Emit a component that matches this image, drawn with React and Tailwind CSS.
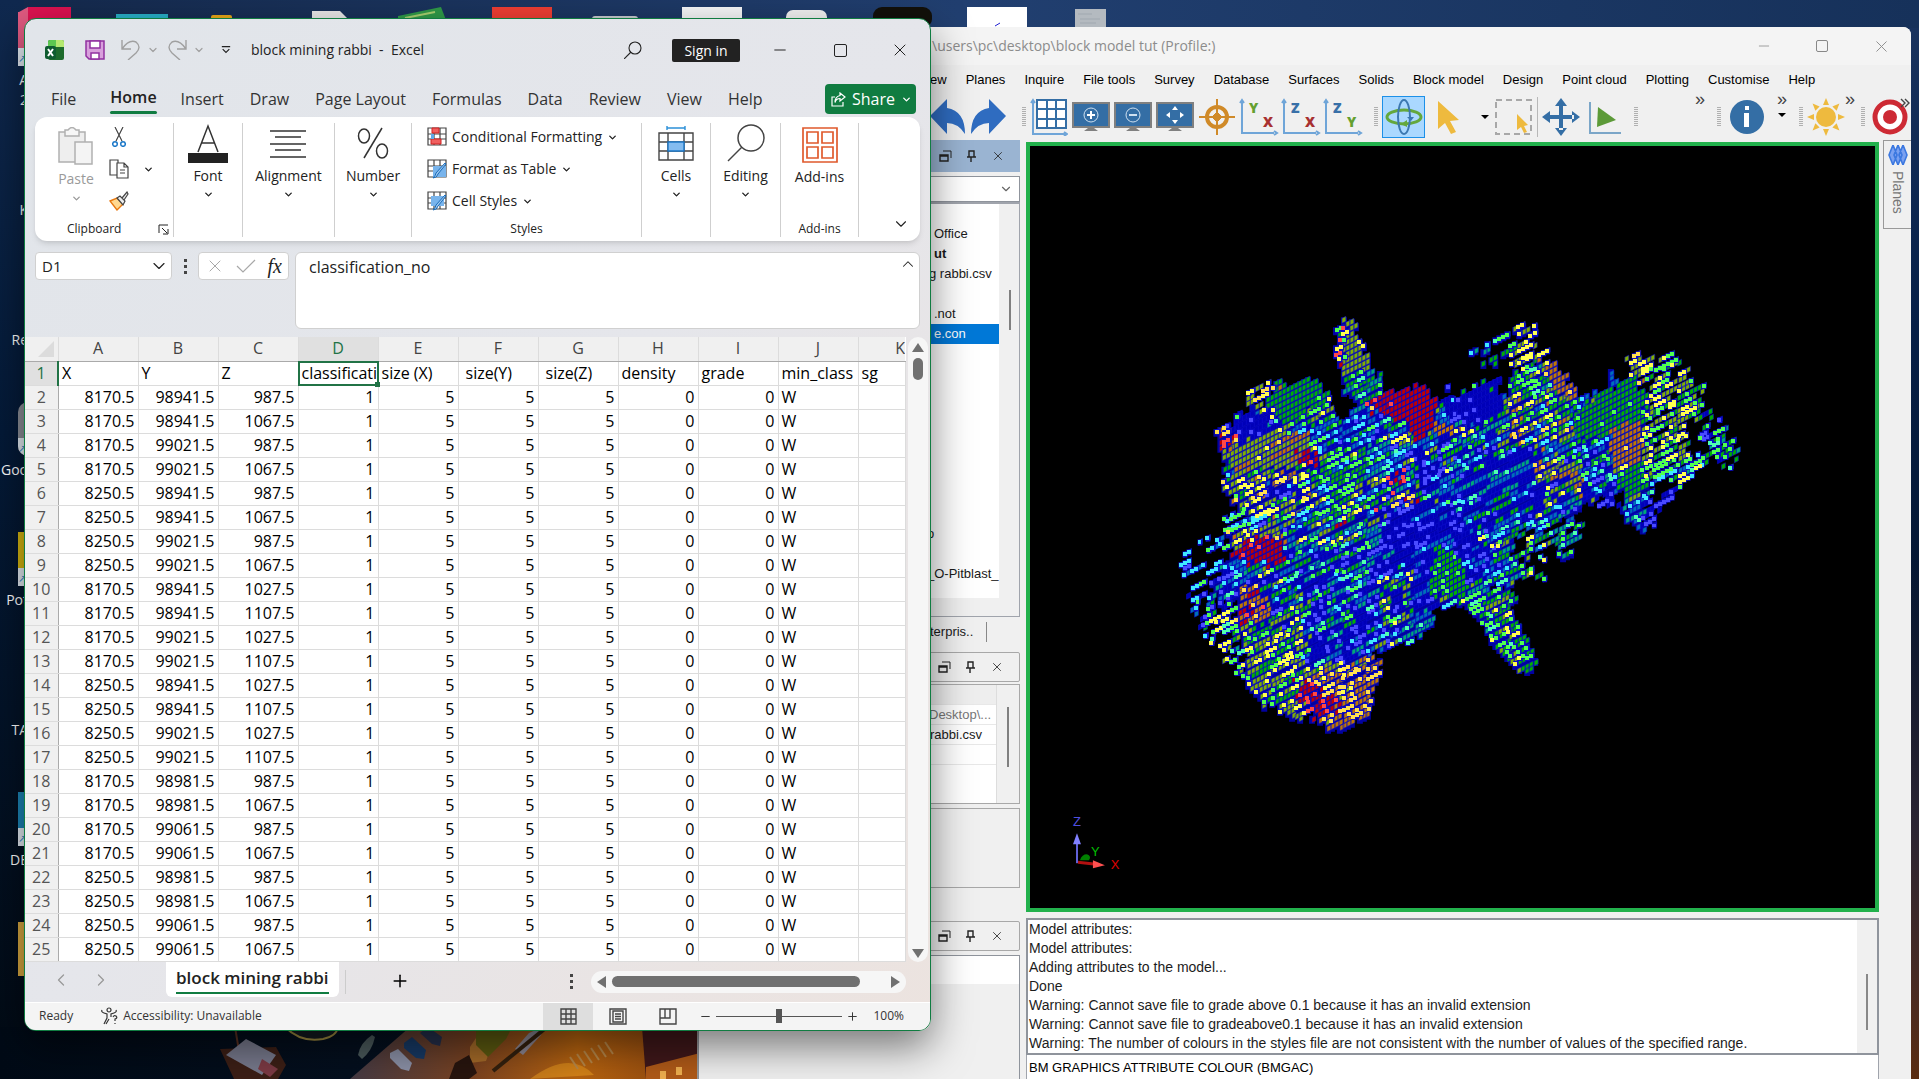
import React, { useState } from 'react';
import { ChevronDown, ChevronUp, ChevronLeft, ChevronRight, X, Plus, Minus } from 'lucide-react';

const HEADERS = ['X', 'Y', 'Z', 'classificati', 'size (X)', 'size(Y)', 'size(Z)', 'density', 'grade', 'min_class', 'sg'];
const COLUMNS = ['A', 'B', 'C', 'D', 'E', 'F', 'G', 'H', 'I', 'J', 'K'];

const COORDS = [
  [8170.5, 98941.5, 987.5], [8170.5, 98941.5, 1067.5], [8170.5, 99021.5, 987.5], [8170.5, 99021.5, 1067.5],
  [8250.5, 98941.5, 987.5], [8250.5, 98941.5, 1067.5], [8250.5, 99021.5, 987.5], [8250.5, 99021.5, 1067.5],
  [8170.5, 98941.5, 1027.5], [8170.5, 98941.5, 1107.5], [8170.5, 99021.5, 1027.5], [8170.5, 99021.5, 1107.5],
  [8250.5, 98941.5, 1027.5], [8250.5, 98941.5, 1107.5], [8250.5, 99021.5, 1027.5], [8250.5, 99021.5, 1107.5],
  [8170.5, 98981.5, 987.5], [8170.5, 98981.5, 1067.5], [8170.5, 99061.5, 987.5], [8170.5, 99061.5, 1067.5],
  [8250.5, 98981.5, 987.5], [8250.5, 98981.5, 1067.5], [8250.5, 99061.5, 987.5], [8250.5, 99061.5, 1067.5],
];

const MENUS = ['ew', 'Planes', 'Inquire', 'File tools', 'Survey', 'Database', 'Surfaces', 'Solids', 'Block model', 'Design', 'Point cloud', 'Plotting', 'Customise', 'Help'];

const LOG = [
  'Model attributes:',
  'Model attributes:',
  'Adding attributes to the model...',
  'Done',
  'Warning: Cannot save file to grade above 0.1 because it has an invalid extension',
  'Warning: Cannot save file to gradeabove0.1 because it has an invalid extension',
  'Warning: The number of colours in the styles file are not consistent with the number of values of the specified range.',
];

/* ---------- Block model ---------- */

// [front face, side face]
const GRADES = {
  b: ['#4a4aff', '#0000b8'],
  c: ['#40e8ff', '#0070b8'],
  t: ['#50ffb0', '#00a878'],
  g: ['#50ff50', '#00b000'],
  y: ['#ffff50', '#80b000'],
  o: ['#ffe050', '#c07800'],
  r: ['#ff4848', '#c00000'],
};

// later zones win over earlier ones: outline, grades, share of visible fronts, density
const ZONES = [
  { p: '205,350 250,330 300,300 440,300 490,350 530,320 640,290 740,290 900,290 1000,250 1110,280 1200,270 1300,300 1300,480 1215,570 1160,600 1080,640 1000,700 940,850 880,860 800,905 735,930 735,980 660,1020 580,1060 400,1120 300,1080 210,900 200,690 240,640 190,560 190,470', c: 'bcgtycbg', f: 0.3, d: 1 },
  // left fan
  { p: '65,770 90,730 170,710 240,700 240,900 250,1100 185,1075 155,1050 120,980 100,930 80,820', c: 'ccbgc', f: 0.7, d: 0.42 },
  { p: '130,920 220,900 280,1100 300,1200 230,1140 160,1050', c: 'yggyt', f: 0.7, d: 0.6 },
  { p: '170,650 240,640 300,640 300,700 200,690', c: 'ccgb', f: 0.7, d: 0.9 },
  // top left lobe
  { p: '240,310 255,262 330,240 360,300 300,330', c: 'yyo', f: 0.5, d: 0.8 },
  { p: '300,290 330,250 400,225 440,230 470,300 450,340 330,370', c: 'ggg', f: 0.02, d: 1 },
  { p: '390,330 460,290 490,350 440,375 390,375', c: 'yyg', f: 0.35, d: 1 },
  { p: '200,360 260,320 310,350 310,390 220,420', c: 'bbb', f: 0.1, d: 1 },
  { p: '165,390 190,375 215,400 215,430 175,450', c: 'rro', f: 0.45, d: 1 },
  { p: '190,440 220,420 330,385 420,390 420,440 380,490 210,515 190,470', c: 'yyyyo', f: 0.02, d: 1 },
  { p: '195,510 420,500 420,560 380,640 240,640 190,560', c: 'yyygo', f: 0.45, d: 1 },
  { p: '290,545 390,540 390,590 300,590', c: 'bcb', f: 0.2, d: 1 },
  { p: '370,460 440,450 445,490 375,490', c: 'rrr', f: 0.1, d: 1 },
  { p: '390,380 560,320 620,400 560,440 430,440', c: 'cccbg', f: 0.5, d: 1 },
  { p: '430,440 620,440 600,560 520,640 400,640 420,520', c: 'gggycg', f: 0.4, d: 1 },
  // spike
  { p: '475,90 500,55 522,55 550,110 575,190 590,240 500,230 475,130', c: 'yyyy', f: 0.04, d: 1 },
  { p: '470,85 500,60 510,130 505,200 485,200', c: 'yryg', f: 0.9, d: 1 },
  { p: '495,215 585,210 625,300 530,310 510,280', c: 'ggt', f: 0.3, d: 1 },
  // red core
  { p: '555,300 590,280 640,270 705,250 740,290 740,380 690,430 670,370 600,350', c: 'rrrrr', f: 0.05, d: 1 },
  { p: '555,290 600,275 610,330 570,330', c: 'rro', f: 0.5, d: 1 },
  { p: '740,360 800,370 790,410 740,420', c: 'oo', f: 0.05, d: 1 },
  { p: '765,300 900,230 920,330 860,370 780,350', c: 'bbb', f: 0.1, d: 1 },
  { p: '765,255 795,250 785,275 765,275', c: 'b', f: 0.3, d: 1 },
  { p: '820,270 900,220 910,245 830,285', c: 'bbg', f: 0.1, d: 1 },
  // upper right streaks
  { p: '950,70 1005,72 1000,98 950,95', c: 'yy', f: 0.6, d: 1 },
  { p: '895,105 940,90 940,108 900,125', c: 'ggt', f: 0.4, d: 1 },
  { p: '830,150 880,125 880,145 830,168', c: 'tc', f: 0.3, d: 1 },
  { p: '858,185 940,140 940,158 865,195', c: 'gg', f: 0.1, d: 1 },
  { p: '940,120 1000,115 1035,140 1040,180 1000,210 940,185', c: 'yygy', f: 0.4, d: 0.9 },
  { p: '940,210 1000,190 1060,260 1140,290 1130,360 940,320', c: 'ggygt', f: 0.3, d: 1 },
  { p: '1020,170 1060,185 1115,270 1080,290 1030,220', c: 'oo', f: 0.1, d: 1 },
  { p: '940,290 1130,300 1130,420 1000,440 900,400', c: 'ygycgog', f: 0.35, d: 1 },
  // middle
  { p: '560,440 780,400 880,440 780,520 600,600 540,560', c: 'ggcbyt', f: 0.3, d: 1 },
  { p: '690,460 770,450 770,540 690,540', c: 'bbc', f: 0.5, d: 1 },
  { p: '620,510 655,505 655,540 620,540', c: 'r', f: 0.4, d: 1 },
  { p: '590,580 690,570 690,605 590,610', c: 'oyr', f: 0.5, d: 1 },
  { p: '780,480 1000,440 1060,540 1000,640 900,700 800,640', c: 'btcbgb', f: 0.12, d: 1 },
  { p: '1000,480 1120,440 1140,560 1040,620', c: 'yogyb', f: 0.12, d: 1 },
  { p: '600,620 780,600 880,740 900,800 800,860 700,930 640,800 600,700', c: 'bbbbbc', f: 0.25, d: 1 },
  { p: '370,760 600,720 660,820 620,1000 500,1080 400,1100 400,880', c: 'bbcbbtg', f: 0.35, d: 1 },
  { p: '400,680 600,640 600,730 420,740', c: 'gtyc', f: 0.25, d: 1 },
  { p: '470,660 505,655 500,680 470,685', c: 'r', f: 0.2, d: 1 },
  { p: '590,840 680,820 660,960 590,960', c: 'gytb', f: 0.2, d: 1 },
  { p: '740,740 790,740 830,860 790,900 735,880', c: 'ggg', f: 0.08, d: 1 },
  { p: '660,950 735,925 735,980 655,1030', c: 'tct', f: 0.2, d: 1 },
  // lower right fragments
  { p: '930,690 1080,640 1135,665 1105,740 1020,735 950,770', c: 'ggtyc', f: 0.35, d: 0.8 },
  { p: '1065,750 1095,750 1090,775 1065,778', c: 'gt', f: 0.6, d: 1 },
  { p: '950,780 1030,765 1030,835 965,835', c: 'gyt', f: 0.5, d: 0.7 },
  { p: '1150,570 1215,570 1215,630 1180,630', c: 'b', f: 0.4, d: 0.9 },
  { p: '800,890 860,870 945,850 945,920 970,1000 1000,1060 1000,1110 960,1110 890,1020', c: 'ggggy', f: 0.25, d: 1 },
  { p: '810,890 860,870 890,960 960,1060 940,1070 860,980', c: 'tcggg', f: 0.8, d: 1 },
  // bottom left
  { p: '205,740 270,700 340,700 345,790 240,790', c: 'rrrrr', f: 0.05, d: 1 },
  { p: '200,690 330,670 345,740 300,700 210,740', c: 'yyo', f: 0.2, d: 1 },
  { p: '190,780 240,770 250,860 180,920 150,860', c: 'bbct', f: 0.5, d: 1 },
  { p: '225,860 280,860 310,960 220,970', c: 'oro', f: 0.2, d: 1 },
  { p: '220,970 400,960 400,1100 300,1180 250,1080', c: 'yyg', f: 0.3, d: 1 },
  { p: '230,1080 400,1060 400,1260 370,1260 320,1220 280,1200 240,1160', c: 'yyygg', f: 0.4, d: 1 },
  { p: '385,1110 480,1080 590,1070 605,1120 575,1160 575,1230 515,1280 460,1295 430,1245', c: 'oooy', f: 0.4, d: 1 },
  { p: '370,1150 430,1150 500,1230 430,1250 375,1190', c: 'rrrr', f: 0.25, d: 1 },
  // right arm
  { p: '1100,320 1260,230 1300,280 1300,400 1180,430 1110,400', c: 'gggg', f: 0.02, d: 1 },
  { p: '1100,430 1200,400 1220,540 1140,560', c: 'tcbg', f: 0.3, d: 1 },
  { p: '1240,190 1270,148 1310,160 1300,240 1250,230', c: 'yyoy', f: 0.5, d: 0.85 },
  { p: '1195,205 1220,205 1215,260 1195,250', c: 'c', f: 0.5, d: 1 },
  { p: '1300,200 1345,155 1395,165 1415,230 1440,260 1440,340 1380,480 1280,480 1290,300', c: 'yygyg', f: 0.5, d: 0.9 },
  { p: '1195,370 1290,370 1280,480 1210,520 1200,440', c: 'ooo', f: 0.06, d: 1 },
  { p: '1210,500 1290,480 1290,600 1240,600', c: 'gyg', f: 0.1, d: 1 },
  { p: '1410,340 1460,300 1535,440 1520,510 1460,490', c: 'gtggb', f: 0.35, d: 0.85 },
  { p: '1290,480 1460,450 1410,540 1370,560 1290,600', c: 'gtcyg', f: 0.8, d: 0.85 },
  { p: '1290,590 1370,550 1345,630 1320,635 1320,675 1285,680', c: 'bb', f: 0.6, d: 0.9 },
  { p: '1240,600 1290,590 1285,680 1240,650', c: 'ctc', f: 0.4, d: 1 },
].map((z) => ({ ...z, p: z.p.split(' ').map((s) => s.split(',').map(Number)) }));

function inside(poly, x, y) {
  let hit = false;
  for (let i = 0, j = poly.length - 1; i < poly.length; j = i++) {
    const [xi, yi] = poly[i];
    const [xj, yj] = poly[j];
    if (yi > y !== yj > y && x < ((xj - xi) * (y - yi)) / (yj - yi) + xi) hit = !hit;
  }
  return hit;
}

function noise(a, b) {
  const n = Math.sin(a * 127.1 + b * 311.7) * 43758.5453;
  return n - Math.floor(n);
}

function buildModel() {
  const sides = {};
  const fronts = {};
  let core = '';
  let rims = '';
  for (let i = 0; i < 150; i++) {
    for (let j = 0; j < 130; j++) {
      const x = i * 4;
      const y = j * 6 - i * 2;
      // wobble the zone edges so they do not read as straight cuts
      const zx = x * 2.613 + (noise(i, j) - 0.5) * 22;
      const zy = y * 3 + (noise(j, i) - 0.5) * 22;
      let zone = null;
      for (const z of ZONES) if (inside(z.p, zx, zy)) zone = z;
      if (!zone || noise(Math.floor(i / 2), j + 7) > zone.d) continue;
      const mixed = zone.f > 0.1;
      const run = mixed ? 2 + Math.floor(noise(j, 4) * 4) : 5;
      const pick = Math.floor(noise(Math.floor(i / run) + 3, j + 0.5) * zone.c.length);
      const [front, side] = GRADES[zone.c[pick]];
      const dx = mixed ? Math.round(noise(j, Math.floor(i / 6)) * 2) : 0;
      const dy = mixed ? Math.round(noise(Math.floor(i / 6), j) * 3) - 1 : 0;
      if (zone.d === 1) core += `M${x - 1} ${y - 1}h6v8h-6z`;
      sides[side] = (sides[side] || '') + `M${x + dx} ${y + dy}l4 -2v5l-4 2z`;
      if (noise(i + 50, j * 2) < zone.f) {
        rims += `M${x + dx - 1} ${y + dy - 1}h5v6h-5z`;
        fronts[front] = (fronts[front] || '') + `M${x + dx - 1} ${y + dy}h4v4h-4z`;
      }
    }
  }
  return { core, rims, sides: Object.entries(sides), fronts: Object.entries(fronts) };
}

const MODEL = buildModel();

function ModelView() {
  return (
    <svg className="block h-full w-full" viewBox="0 0 846 765" role="img" aria-label="Block model">
      <g transform="translate(120 155)">
        <path d={MODEL.core} fill="#0202a0" />
        <g stroke="#0a0ac8" strokeWidth="0.6">
          {MODEL.sides.map(([fill, d]) => <path key={fill} d={d} fill={fill} />)}
        </g>
        <path d={MODEL.rims} fill="#0a0ac8" />
        <g shapeRendering="crispEdges">
          {MODEL.fronts.map(([fill, d]) => <path key={fill} d={d} fill={fill} />)}
        </g>
      </g>
      <g fontFamily="Liberation Sans, sans-serif" fontSize="13">
        <text x="42" y="683" fill="#5050e0">Z</text>
        <text x="60" y="713" fill="#00c000">Y</text>
        <text x="80" y="726" fill="#e00000">X</text>
      </g>
      <path d="M46 720V698" stroke="#6060d8" strokeWidth="2" />
      <path d="M42 701l4 -11 4 11z" fill="#8080ff" />
      <path d="M47 719l18 2" stroke="#b01010" strokeWidth="3" />
      <path d="M62 717l12 5 -12 3z" fill="#ff5050" />
      <path d="M49 717q2-6 7-6q5 2 2 6z" fill="#008000" />
    </svg>
  );
}

/* ---------- Desktop ---------- */

function Wallpaper() {
  return (
    <>
      <div className="absolute inset-0 bg-linear-to-b from-[#1a3460] via-[#061f47] via-30% to-[#02070f]" />
      <div className="absolute inset-x-0 top-0 h-7 bg-linear-to-r from-[#14294c] via-[#213f70] to-[#16315a]" />
      <div className="absolute inset-y-0 left-0 w-6 bg-linear-to-b from-[#10294f] via-[#041a38] via-40% to-[#020a14]" />
      <div className="absolute right-0 bottom-0 h-[520px] w-2 bg-linear-to-b from-transparent via-[#2a2433] to-[#5a2c10]" />
      <svg className="absolute bottom-0 left-0 h-[52px] w-[700px]" viewBox="0 0 700 52" preserveAspectRatio="none">
        <defs>
          <linearGradient id="quay" x1="0" x2="1">
            <stop offset="0" stopColor="#453a44" />
            <stop offset="0.35" stopColor="#7a4220" />
            <stop offset="0.65" stopColor="#b8640f" />
            <stop offset="1" stopColor="#8a4410" />
          </linearGradient>
          <linearGradient id="sea" x1="0" x2="1">
            <stop offset="0" stopColor="#010a16" />
            <stop offset="1" stopColor="#071426" />
          </linearGradient>
        </defs>
        <rect width="700" height="52" fill="url(#sea)" />
        <path d="M350 52L410 0H700V52z" fill="url(#quay)" />
        <path d="M220 22l14 30h44l8-14-10-18z" fill="#3c1f16" />
        <path d="M235 0l4 24" stroke="#5a3020" strokeWidth="2" />
        <path d="M246 12l30 16-14 20-36-20z" fill="#77798c" />
        <path d="M262 32l16 10-8 8-12-8z" fill="#7c3a44" />
        <path d="M285 0q16 16 38 12q14-3 15-12z" fill="#141a20" stroke="#a08c40" strokeWidth="2" />
        <path d="M358 28q2-12 14-20l3 2q-3 14-13 22z" fill="#4b5a5c" />
        <path d="M390 26l8-4 14 14-3 8-8-2-11-11z" fill="#8b90a6" />
        <path d="M404 16l8-6 14 13-2 9-8-1-12-10z" fill="#173a66" />
        <path d="M420 6l8-6 14 10-2 9-8-2z" fill="#25304c" />
        <path d="M470 20l8-12 14 10-6 16-16 2z" fill="#a46a28" />
        <path d="M455 36l14-8 8 18-8 6h-20z" fill="#28150e" />
        <path d="M476 0h36l-6 12-18 18-12-12z" fill="#5c5a10" />
        <path d="M515 22l14-16 14-6-2 8-18 20z" fill="#8d8794" />
        <path d="M493 44l54-44" stroke="#33200e" strokeWidth="4" />
        <path d="M530 52q40-30 64-4z" fill="#f0a020" opacity="0.5" />
        {[0, 1, 2, 3, 4, 5].map((n) => (
          <path key={n} d="M570 30l8 12" transform={`translate(${n * 7} ${-n * 3})`} stroke="#b8884a" strokeWidth="2" />
        ))}
        <path d="M642 0h58v52h-54z" fill="#40181a" />
        <path d="M646 40l54-14v26h-54z" fill="#b05a18" />
        <path d="M660 44h6v8h-6zM676 40h6v8h-6z" fill="#f0b050" />
      </svg>
      {/* tops of shortcuts that peek out above the windows */}
      <svg className="absolute top-0 left-0 h-7 w-[1120px]" viewBox="0 0 1120 28">
        <path d="M19 12l9-5v21h-9z" fill="#e05a80" />
        <rect x="28" y="7" width="43" height="21" fill="#dc1250" />
        <rect x="116" y="14" width="52" height="14" fill="#28b0c8" />
        <rect x="211" y="15" width="21" height="13" rx="2" fill="#e8a818" />
        <path d="M312 11h28l7 7v10h-35z" fill="#e8e8e8" />
        <path d="M398 16l43-9 8 21h-51z" fill="#2f9a48" />
        <path d="M405 18l30-6" stroke="#a8d070" strokeWidth="2" />
        <rect x="492" y="7" width="60" height="21" fill="#ef3e33" />
        <rect x="592" y="16" width="46" height="12" rx="3" fill="#c8ccd0" />
        <rect x="682" y="7" width="60" height="21" fill="#f6f7f8" />
        <rect x="786" y="10" width="41" height="18" rx="7" fill="#f2f2f2" />
        <rect x="873" y="7" width="59" height="21" rx="9" fill="#12100a" />
        <rect x="967" y="7" width="60" height="21" fill="#fff" />
        <path d="M995 26l5-3" stroke="#2020d0" />
        <rect x="1075" y="9" width="31" height="19" fill="#b4bac0" />
        <path d="M1078 14h14M1080 19h20M1080 23h16" stroke="#a0a8b0" />
      </svg>
    </>
  );
}

const SHORTCUTS = [
  { label: 'A', sub: '2', icon: 'bg-[#e05a80]' },
  { label: 'K', sub: '', icon: '' },
  { label: 'Re', sub: '', icon: '' },
  { label: 'Goo', sub: '', icon: 'bg-[#8c8f98] rounded-l-full' },
  { label: 'Pot', sub: '', icon: 'bg-[#d8b810]' },
  { label: 'TA', sub: '', icon: '' },
  { label: 'DE', sub: '', icon: 'bg-[#1c86b8]' },
  { label: '', sub: '', icon: 'bg-[#d8a840]' },
];

function DesktopShortcuts() {
  return (
    <ul className="absolute top-3 left-0 w-7 font-['Open_Sans',sans-serif] text-sm leading-5 text-white">
      {SHORTCUTS.map((s, i) => (
        <li key={i} className="flex h-[130px] flex-col items-end">
          <span className={`h-[54px] w-2.5 overflow-hidden ${s.icon}`}>
            {s.icon && i !== 7 && <span className="mt-9 block h-5 bg-[#e4ecf4] text-[10px] text-[#1878c0]">↗</span>}
          </span>
          <span className="mt-1">{s.label}</span>
          <span>{s.sub}</span>
        </li>
      ))}
    </ul>
  );
}

/* ---------- Surpac window ---------- */

function Grip() {
  return <span className="h-5 w-1 shrink-0 bg-[repeating-linear-gradient(#b0b0b0_0_1px,transparent_1px_2px)]" />;
}

function Monitor({ children }) {
  return (
    <svg width="38" height="38" viewBox="0 0 38 38" fill="none">
      <path d="M12 33h14l-4-3v-4h-6v4z" fill="#808080" />
      <rect x="1" y="5" width="36" height="24" fill="#346ea5" stroke="#808080" strokeWidth="2" />
      {children}
    </svg>
  );
}

function AxisIcon({ a, b, aFill, bFill }) {
  return (
    <svg width="38" height="38" viewBox="0 0 38 38" className="overflow-visible">
      <path d="M2 4V35H34M0 5l2-3 2 3M34 33l3 2-3 2" fill="none" stroke="#6fa5d8" strokeWidth="2" />
      <g fontFamily="Open Sans, sans-serif" fontWeight="800" fontSize="14">
        <text x="9" y="15" fill={aFill}>{a}</text>
        <text x="23" y="29" fill={bFill}>{b}</text>
      </g>
    </svg>
  );
}

function ToolButton({ label, className = '', children }) {
  return <button type="button" aria-label={label} className={`flex shrink-0 items-center justify-center ${className}`}>{children}</button>;
}

function Toolbar() {
  return (
    <div className="flex h-[46px] shrink-0 items-center pl-[232px]">
      <ToolButton label="Undo" className="w-9">
        <svg width="36" height="36" viewBox="0 0 36 36"><path d="M0 17L17 0v9q18 3 18 26Q28 24 17 24v11z" fill="#2f6cc0" /></svg>
      </ToolButton>
      <ToolButton label="Redo" className="ml-1 w-9">
        <svg width="36" height="36" viewBox="0 0 36 36"><path d="M36 17L19 0v9Q1 12 1 35q7-11 18-11v11z" fill="#2f6cc0" /></svg>
      </ToolButton>
      <span className="ml-4 flex"><Grip /></span>
      <div className="ml-1 flex items-center gap-1">
        <ToolButton label="Grid">
          <svg width="38" height="38" viewBox="0 0 38 38" fill="none">
            <path d="M3 3V36H36M1 5l2-3 2 3M34 34l3 2-3 2" stroke="#6fa5d8" strokeWidth="2" />
            <rect x="7" y="2" width="29" height="28" fill="#fff" stroke="#346ea5" strokeWidth="2" />
            <path d="M17 2v28M26 2v28M7 11h29M7 21h29" stroke="#346ea5" strokeWidth="2" />
          </svg>
        </ToolButton>
        <ToolButton label="Zoom in"><Monitor><circle cx="19" cy="17" r="7" stroke="#cfe0f0" /><path d="M15 17h8M19 13v8" stroke="#fff" strokeWidth="2" /></Monitor></ToolButton>
        <ToolButton label="Zoom out"><Monitor><circle cx="19" cy="17" r="7" stroke="#cfe0f0" /><path d="M15 17h8" stroke="#cfe0f0" strokeWidth="2" /></Monitor></ToolButton>
        <ToolButton label="Zoom all"><Monitor><path d="M19 8l3 4h-6zM19 26l3-4h-6zM10 17l4-3v6zM28 17l-4-3v6z" fill="#fff" /></Monitor></ToolButton>
        <ToolButton label="Centre view">
          <svg width="38" height="38" viewBox="0 0 38 38" fill="none" stroke="#d08a28">
            <circle cx="19" cy="19" r="10" strokeWidth="4" />
            <path d="M19 1v36M1 19h36" strokeWidth="2" />
            <path d="M19 14l5 5-5 5-5-5z" fill="#d08a28" />
          </svg>
        </ToolButton>
        <ToolButton label="XY view"><AxisIcon a="Y" b="X" aFill="#64a030" bFill="#a83030" /></ToolButton>
        <ToolButton label="XZ view"><AxisIcon a="Z" b="X" aFill="#3870a8" bFill="#a83030" /></ToolButton>
        <ToolButton label="YZ view"><AxisIcon a="Z" b="Y" aFill="#3870a8" bFill="#64a030" /></ToolButton>
      </div>
      <span className="ml-3 flex"><Grip /></span>
      <ToolButton label="Rotate" className="ml-1 h-[42px] w-[43px] border border-[#1c90e8] bg-[#aad8ff]">
        <svg width="38" height="38" viewBox="0 0 38 38" fill="none" strokeWidth="3">
          <ellipse cx="19" cy="19" rx="17" ry="7" stroke="#64a83c" />
          <ellipse cx="19" cy="19" rx="6" ry="17" stroke="#3c78b0" strokeWidth="2" />
          <path d="M22 19h7l-3 4z" fill="#3c78b0" />
          <path d="M22 22v7l-6-3z" fill="#64a83c" />
        </svg>
      </ToolButton>
      <ToolButton label="Select" className="ml-3">
        <svg width="24" height="36" viewBox="0 0 24 36"><path d="M1 2l21 19-9 1 6 11-5 2-6-11-7 6z" fill="#eeba3e" /></svg>
      </ToolButton>
      <svg className="ml-5 shrink-0" width="8" height="6" viewBox="0 0 8 6"><path d="M0 1h8L4 5z" /></svg>
      <ToolButton label="Box select" className="ml-1.5">
        <svg width="38" height="38" viewBox="0 0 38 38">
          <rect x="1" y="2" width="35" height="34" fill="none" stroke="#a8a8a8" strokeWidth="2" strokeDasharray="6 4" />
          <path d="M22 16l11 11-4 1 3 6-3 1-3-6-4 3z" fill="#eeba3e" />
        </svg>
      </ToolButton>
      <span className="mx-1 h-10 w-px shrink-0 bg-[#b8b8b8]" />
      <ToolButton label="Move">
        <svg width="38" height="38" viewBox="0 0 38 38" fill="#346ea5">
          <path d="M17 6h4v26h-4zM6 17h26v4H6zM19 0l6 8H13zM19 38l6-8H13zM0 19l8-6v12zM38 19l-8-6v12z" />
        </svg>
      </ToolButton>
      <ToolButton label="Plane view" className="ml-2">
        <svg width="34" height="36" viewBox="0 0 34 36">
          <path d="M2 3V34H33" fill="none" stroke="#7ba6c8" strokeWidth="2" />
          <path d="M10 8l18 13-19 7z" fill="#5c9a38" />
        </svg>
      </ToolButton>
      <span className="ml-3 flex"><Grip /></span>
      <span className="ml-auto self-start text-lg leading-[10px] text-[#444]">»</span>
      <span className="ml-3 flex"><Grip /></span>
      <ToolButton label="Information" className="ml-2">
        <svg width="36" height="36" viewBox="0 0 36 36">
          <circle cx="18" cy="18" r="17" fill="#346ea5" />
          <path d="M16 7h4v4h-4zM15 14h5v14h-5z" fill="#fff" />
        </svg>
      </ToolButton>
      <div className="ml-3 flex flex-col items-center gap-2 self-start">
        <span className="text-lg leading-[10px] text-[#444]">»</span>
        <svg width="8" height="6" viewBox="0 0 8 6"><path d="M0 1h8L4 5z" /></svg>
      </div>
      <span className="ml-3 flex"><Grip /></span>
      <ToolButton label="Lighting" className="ml-1">
        <svg width="38" height="38" viewBox="0 0 38 38" fill="#eeba3e">
          <circle cx="19" cy="19" r="10" />
          {[0, 45, 90, 135, 180, 225, 270, 315].map((a) => <path key={a} d="M19 0l3 7h-6z" transform={`rotate(${a} 19 19)`} />)}
        </svg>
      </ToolButton>
      <span className="self-start text-lg leading-[10px] text-[#444]">»</span>
      <span className="ml-1.5 flex"><Grip /></span>
      <ToolButton label="Snap" className="ml-1.5">
        <svg width="40" height="38" viewBox="0 0 40 38">
          <circle cx="19" cy="19" r="15" fill="#fff" stroke="#cd2a34" strokeWidth="5" />
          <circle cx="19" cy="19" r="7" fill="#cd2a34" />
          <path d="M30 1l4 4-4 4M34 1l4 4-4 4" fill="none" stroke="#444" strokeWidth="1.4" />
        </svg>
      </ToolButton>
    </div>
  );
}

function PanelHeader({ active }) {
  return (
    <div className={`flex shrink-0 items-center justify-end gap-3.5 pr-[15px] text-[#222] ${active ? 'h-8 bg-[#9ab4d2]' : 'h-[30px] rounded-xs border border-[#a8a8a8] bg-[#f0f0f0]'}`}>
      <button type="button" aria-label="Float">
        <svg width="13" height="13" viewBox="0 0 13 13" fill="none" stroke="currentColor"><path d="M1 5h8v6H1zM1 6h8" strokeWidth="1.4" /><path d="M4 1h8v7" /></svg>
      </button>
      <button type="button" aria-label="Pin">
        <svg width="11" height="13" viewBox="0 0 11 13" fill="none" stroke="currentColor"><path d="M3 1h5v6H3zM1 7h9M5 7v5" strokeWidth="1.4" /></svg>
      </button>
      <button type="button" aria-label="Close"><X size={14} strokeWidth={1.4} /></button>
    </div>
  );
}

const FILES = ['', 'Office', 'ut', 'g rabbi.csv', '', '.not', 'e.con'];

function Navigator() {
  return (
    <div className="flex w-[322px] shrink-0 flex-col text-[13px] text-[#1a1a1a]">
      <PanelHeader active />
      <div className="mt-1 flex h-[26px] shrink-0 items-center justify-end border border-[#8f949c] bg-white pr-1.5 text-[#666]">
        <ChevronDown size={14} />
      </div>
      <div className="flex h-[415px] shrink-0 border border-t-2 border-[#a0a4ac]">
        <ul className="h-[394px] flex-1 bg-white">
          {FILES.map((f, i) => (
            <li key={i} className={`h-5 leading-5 whitespace-nowrap ${f === 'g rabbi.csv' ? 'pl-[230px]' : 'pl-[235px]'} ${f === 'e.con' ? 'bg-[#0078d7] text-white' : ''} ${f === 'ut' ? 'font-bold' : ''}`}>{f}</li>
          ))}
          <li className="mt-[180px] h-10 pl-[228px] leading-5">o</li>
          <li className="h-5 pl-[228px] leading-5 whitespace-nowrap">_O-Pitblast_</li>
        </ul>
        <div className="w-6 shrink-0 pt-[86px] pl-2.5"><div className="h-10 w-0.5 bg-[#808080]" /></div>
      </div>
      <div className="flex h-[30px] shrink-0 items-center pl-[232px]">
        <span className="w-[56px]">terpris..</span>
        <span className="h-5 w-px bg-[#888]" />
      </div>
      <div className="mt-[5px] flex flex-col"><PanelHeader /></div>
      <div className="mt-0.5 flex h-[120px] shrink-0 border border-[#a8a8a8]">
        <div className="flex-1 divide-y divide-[#e8e8e8] border-r border-[#ddd] bg-white leading-5">
          <div className="h-5 bg-[#eee]" />
          <div className="h-5 pl-[230px] whitespace-nowrap text-[#777]">Desktop\...</div>
          <div className="h-5 pl-[231px]">rabbi.csv</div>
          <div className="h-5" />
          <div className="h-5" />
        </div>
        <div className="w-[22px] shrink-0 pt-[22px] pl-2.5"><div className="h-[60px] w-0.5 bg-[#808080]" /></div>
      </div>
      <div className="mt-1 h-20 shrink-0 border border-[#a8a8a8]" />
      <div className="mt-[33px] flex flex-col"><PanelHeader /></div>
      <div className="mt-1 flex-1 border border-b-0 border-[#8f949c]"><div className="h-7 bg-white" /></div>
    </div>
  );
}

function SurpacWindow() {
  return (
    <section className="absolute top-[27px] right-2 bottom-0 left-[697px] flex flex-col overflow-hidden rounded-t-lg border-l border-[#999] bg-[#f0f0f0] font-['Liberation_Sans',sans-serif] text-[13px] text-black">
      <div className="flex h-[38px] shrink-0 items-center bg-[#f4f4f4] pl-[234px] font-['Open_Sans',sans-serif] text-sm text-[#8c8c8c]">
        <span>\users\pc\desktop\block model tut (Profile:)</span>
        <div className="ml-auto flex">
          <button type="button" aria-label="Minimise" className="flex w-[58px] items-center justify-center"><Minus size={16} strokeWidth={1.2} /></button>
          <button type="button" aria-label="Maximise" className="flex w-[58px] items-center justify-center"><span className="h-3 w-3 rounded-xs border border-[#888]" /></button>
          <button type="button" aria-label="Close" className="flex w-[60px] items-center justify-center"><X size={19} strokeWidth={1.2} /></button>
        </div>
      </div>
      <nav className="flex h-[29px] shrink-0 items-center gap-[19px] pl-[232px] whitespace-nowrap">
        {MENUS.map((m) => <button key={m} type="button">{m}</button>)}
      </nav>
      <Toolbar />
      <div className="flex min-h-0 flex-1">
        <Navigator />
        <div className="ml-1.5 flex min-w-0 flex-1 flex-col">
          <div className="mt-0.5 min-h-0 flex-1 border-4 border-[#22b14c] bg-black"><ModelView /></div>
          <div className="mt-1.5 flex shrink-0 justify-between border-2 border-[#8f949c] bg-white pl-px text-[#1c1c1c]">
            <div className="text-sm leading-[19px] whitespace-nowrap">
              {LOG.map((line, i) => <p key={i}>{line}</p>)}
            </div>
            <div className="flex w-5 flex-col items-center bg-[#f0f0f0] pt-[54px]"><div className="h-14 w-0.5 bg-[#888]" /></div>
          </div>
          <input aria-label="Command" defaultValue="BM GRAPHICS ATTRIBUTE COLOUR (BMGAC)" className="h-6 shrink-0 border-x border-[#a0a4ac] bg-white pl-0.5" />
        </div>
        <aside className="ml-1 w-7 shrink-0">
          <button type="button" className="flex h-[89px] w-full flex-col items-center gap-1.5 border border-r-0 border-[#999] pt-1 text-sm text-[#777]">
            <svg width="20" height="20" viewBox="0 0 20 20" fill="none" stroke="#3c78e0" strokeWidth="1.6">
              <path d="M5 0l4 10-4 10-4-10zM10 0l4 10-4 10-4-10zM15 0l4 10-4 10-4-10z" fill="#7aa0f0" />
            </svg>
            <span className="leading-5 [writing-mode:vertical-rl]">Planes</span>
          </button>
        </aside>
      </div>
    </section>
  );
}

/* ---------- Excel window ---------- */

function TitleBar() {
  return (
    <div className="flex h-[62px] items-center pl-5 text-[#222]">
      <svg width="20" height="20" viewBox="0 0 20 20">
        <rect x="3" width="16" height="20" rx="2" fill="#1d6b2c" />
        <path d="M3 2q0-2 2-2h6v7H3z" fill="#5cc850" />
        <path d="M11 0h6q2 0 2 2v5h-8z" fill="#b4e870" />
        <rect y="6" width="11" height="13" rx="2" fill="#0f5c30" />
        <path d="M3 9l5 7M8 9l-5 7" stroke="#fff" strokeWidth="2" />
      </svg>
      <button type="button" aria-label="Save" className="ml-5">
        <svg width="20" height="20" viewBox="0 0 20 20" stroke="#9030a0" strokeWidth="1.5">
          <path d="M1 1h18v18H4l-3-3z" fill="#d8a0dc" />
          <path d="M5 1h10v7H5zM6 13h8v6H6z" fill="#fff" />
        </svg>
      </button>
      <button type="button" aria-label="Undo" className="ml-4 flex items-center gap-1.5 text-[#a0a0a0]">
        <svg width="20" height="20" viewBox="0 0 20 20" fill="none" stroke="currentColor" strokeWidth="1.4"><path d="M1 0v9h9M1 9q7-10 14-7q6 5 0 11l-8 7" /></svg>
        <ChevronDown size={12} strokeWidth={2.4} />
      </button>
      <button type="button" aria-label="Redo" className="ml-2 flex items-center gap-1.5 text-[#a0a0a0]">
        <svg width="20" height="20" viewBox="0 0 20 20" fill="none" stroke="currentColor" strokeWidth="1.4"><path d="M19 0v9h-9M19 9q-7-10-14-7q-6 5 0 11l8 7" /></svg>
        <ChevronDown size={12} strokeWidth={2.4} />
      </button>
      <button type="button" aria-label="Customize toolbar" className="ml-4">
        <svg width="10" height="10" viewBox="0 0 12 10" fill="none" stroke="currentColor" strokeWidth="1.4"><path d="M1 1h10M2 4l4 4 4-4" /></svg>
      </button>
      <span className="ml-5 text-sm whitespace-pre">block mining rabbi  -  Excel</span>
      <button type="button" aria-label="Search" className="ml-auto">
        <svg width="18" height="18" viewBox="0 0 18 18" fill="none" stroke="currentColor" strokeWidth="1.1"><circle cx="11" cy="7" r="6" /><path d="M7 11l-7 7" /></svg>
      </button>
      <button type="button" className="ml-[30px] h-[23px] w-[68px] rounded-xs bg-[#222] text-sm leading-[23px] text-white">Sign in</button>
      <button type="button" aria-label="Minimize" className="ml-2.5 flex w-[60px] justify-center"><Minus size={18} strokeWidth={1.3} /></button>
      <button type="button" aria-label="Maximize" className="flex w-[60px] justify-center"><span className="h-[13px] w-[13px] rounded-xs border border-[#222]" /></button>
      <button type="button" aria-label="Close" className="flex w-[60px] justify-center"><X size={20} strokeWidth={1.2} /></button>
    </div>
  );
}

function RibbonTabs() {
  return (
    <div className="flex h-9 items-center pl-[26px] text-base text-[#333]">
      <div className="flex h-full items-center gap-[26px]">
        <button type="button" className="mr-2">File</button>
        <button type="button" className="-mr-0.5 flex h-full flex-col justify-end font-semibold text-[#222]">
          <span className="leading-7">Home</span>
          <span className="mb-[3px] h-[3px] rounded-full bg-[#107c41]" />
        </button>
        {['Insert', 'Draw', 'Page Layout', 'Formulas', 'Data', 'Review', 'View', 'Help'].map((t) => (
          <button key={t} type="button">{t}</button>
        ))}
      </div>
      <button type="button" className="mr-3.5 ml-auto flex h-[30px] items-center gap-1.5 rounded bg-[#107c41] pr-1 pl-1.5 text-white">
        <svg width="15" height="15" viewBox="0 0 15 15" fill="none" stroke="currentColor" strokeWidth="1.2"><path d="M4 5H1v9h11v-4M9 1l5 4-5 4V6.500q-4 0-5 4q0-6 5-7z" /></svg>
        Share
        <ChevronDown size={11} strokeWidth={3} />
      </button>
    </div>
  );
}

function BigTool({ label, className, children, chevron = true }) {
  return (
    <div className={`flex shrink-0 flex-col items-center border-r border-[#cfcfcf] ${className}`}>
      <button type="button" className="flex flex-col items-center text-sm leading-5">
        <span className="flex h-10 items-center">{children}</span>
        <span className="mt-[3px]">{label}</span>
        {chevron && <ChevronDown size={11} strokeWidth={3} className="mt-[3px]" />}
      </button>
    </div>
  );
}

function StyleTool({ label, children }) {
  return (
    <button type="button" className="flex h-8 items-center gap-[5px] text-sm">
      <svg width="20" height="20" viewBox="0 0 20 20" fill="none" stroke="#444">
        <path d="M1 1h18v17H1zM1 7h18M1 12h18M7 1v17M13 1v17" fill="#fff" strokeWidth="1.2" />
        {children}
      </svg>
      {label}
      <ChevronDown size={11} strokeWidth={3} />
    </button>
  );
}

const BRUSH = <path d="M19 5l-8 10q-1 4-5 4q3-3 3-5L18 4z" fill="#9cc8f0" stroke="#1c6cb8" />;

function Ribbon() {
  return (
    <div className="mx-2.5 flex h-[124px] rounded-xl bg-white pt-1.5 pb-1 text-[#222] shadow-md">
      <div className="flex w-[139px] shrink-0 flex-col border-r border-[#cfcfcf]">
        <div className="flex">
          <button type="button" className="ml-6 flex w-[34px] flex-col items-center text-sm leading-5 text-[#9a9a9a]">
            <svg className="mt-1" width="36" height="38" viewBox="0 0 36 38" stroke="#b0b0b0" strokeWidth="1.5">
              <path d="M1 5h26v30H1z" fill="#eee" />
              <path d="M7 3h3q4-5 8 0h3v6H7z" fill="#f6f6f6" />
              <path d="M17 15h17v22H17z" fill="#f4f4f4" />
            </svg>
            <span className="mt-1">Paste</span>
            <ChevronDown size={11} strokeWidth={3} className="mt-1" />
          </button>
          <div className="ml-4 flex flex-col gap-3 pt-1">
            <button type="button" aria-label="Cut" className="flex h-5 w-5 justify-center">
              <svg width="14" height="20" viewBox="0 0 14 20" fill="none" stroke="#444" strokeWidth="1.2"><path d="M3 0l7 14M11 0L4 14" /><g stroke="#1c78c8" strokeWidth="1.5"><circle cx="3" cy="17" r="2.300" /><circle cx="11" cy="17" r="2.300" /></g></svg>
            </button>
            <button type="button" aria-label="Copy" className="flex items-center gap-3.5">
              <svg width="20" height="20" viewBox="0 0 20 20" fill="#fff" stroke="#444" strokeWidth="1.2"><path d="M1 1h8v15H1z" /><path d="M8 4h7l4 4v11H8zM15 4v4h4M11 11h5M11 14h5" /></svg>
              <ChevronDown size={11} strokeWidth={3} />
            </button>
            <button type="button" aria-label="Format painter">
              <svg width="20" height="20" viewBox="0 0 20 20" fill="none"><path d="M1 10l7-3 6 6-6 6z" fill="#ffd890" stroke="#e87810" strokeWidth="1.4" /><path d="M8 7l3-2 5 5-2 4zM13 7l5-6 1 2-4 6" fill="#eee" stroke="#444" strokeWidth="1.2" /></svg>
            </button>
          </div>
        </div>
        <div className="mt-auto flex items-center justify-between pr-1 pl-8 text-xs leading-4">
          Clipboard
          <button type="button" aria-label="Clipboard settings"><svg width="11" height="11" viewBox="0 0 11 11" fill="none" stroke="currentColor"><path d="M1 9V1h9M4 4l5 5M10 5v5H5" /></svg></button>
        </div>
      </div>
      <BigTool label="Font" className="w-[69px]">
        <svg width="40" height="40" viewBox="0 0 40 40" fill="none" stroke="#333" strokeWidth="1.5"><path d="M10 29L20 3l10 26M14 20h12" /><path d="M0 30h40v10H0z" fill="#222" stroke="none" /></svg>
      </BigTool>
      <BigTool label="Alignment" className="w-[92px]">
        <svg width="36" height="32" viewBox="0 0 36 32" stroke="#333" strokeWidth="1.4"><path d="M0 4h36M5 10h26M0 17h36M5 23h26M0 30h36" /></svg>
      </BigTool>
      <BigTool label="Number" className="w-[77px]">
        <svg width="32" height="32" viewBox="0 0 32 32" fill="none" stroke="#333" strokeWidth="1.5"><ellipse cx="7" cy="9" rx="5.500" ry="7" /><ellipse cx="25" cy="24" rx="5.500" ry="7" /><path d="M25 1L7 31" /></svg>
      </BigTool>
      <div className="flex w-[230px] shrink-0 flex-col border-r border-[#cfcfcf]">
        <div className="-mt-0.5 flex flex-col items-start pl-[15px]">
          <StyleTool label="Conditional Formatting"><path d="M5 1h7v5H5zM4 12h10v5H4z" fill="#f06060" stroke="#d02020" /><path d="M4 7h3v5H4z" fill="#60a8e8" stroke="none" /></StyleTool>
          <StyleTool label="Format as Table"><path d="M6 7h13v11H6z" fill="#78b4ec" stroke="none" />{BRUSH}</StyleTool>
          <StyleTool label="Cell Styles"><path d="M4 5h13v10H4z" fill="#78b4ec" stroke="none" />{BRUSH}</StyleTool>
        </div>
        <span className="mt-auto text-center text-xs leading-4">Styles</span>
      </div>
      <BigTool label="Cells" className="w-[69px]">
        <svg width="36" height="36" viewBox="0 0 36 36" fill="none" stroke="#444" strokeWidth="1.4"><path d="M1 8h34v27H1zM1 17h34M1 26h34M10 8v27M26 8v27" /><path d="M10 17h16v9H10z" fill="#84bcf0" stroke="#1c78c8" /><path d="M9 3h18M9 1v4M27 1v4" stroke="#2c90d8" /></svg>
      </BigTool>
      <BigTool label="Editing" className="w-[70px]">
        <svg width="38" height="38" viewBox="0 0 38 38" fill="none" stroke="#444" strokeWidth="1.5"><circle cx="24" cy="14" r="13" /><path d="M15 23L1 37" /></svg>
      </BigTool>
      <div className="flex w-[78px] shrink-0 flex-col items-center border-r border-[#cfcfcf]">
        <button type="button" className="flex flex-col items-center text-sm leading-5">
          <svg className="mt-1" width="36" height="36" viewBox="0 0 36 36" fill="none" stroke="#e05a2c" strokeWidth="1.7"><path d="M1 1h34v34H1zM5 5h11v11H5zM20 5h11v11H20zM5 20h11v11H5zM20 20h11v11H20z" /></svg>
          <span className="mt-1">Add-ins</span>
        </button>
        <span className="mt-auto text-xs leading-4">Add-ins</span>
      </div>
      <button type="button" aria-label="Collapse ribbon" className="mt-auto mr-2.5 mb-1 ml-auto"><ChevronDown size={18} strokeWidth={1.5} /></button>
    </div>
  );
}

function FormulaBar() {
  return (
    <div className="mx-2.5 mt-[11px] flex h-[77px] items-start text-base text-[#222]">
      <div className="flex h-7 w-[137px] items-center rounded border border-[#d0d0d0] bg-white pr-0.5">
        <input aria-label="Name box" defaultValue="D1" className="w-full min-w-0 bg-transparent pl-1.5 text-[15px]" />
        <ChevronDown size={20} strokeWidth={1.4} className="shrink-0" />
      </div>
      <div className="flex h-7 w-[26px] flex-col items-center justify-center gap-[3px]">
        {[0, 1, 2].map((n) => <span key={n} className="h-[3px] w-[3px] bg-[#444]" />)}
      </div>
      <div className="flex h-7 w-[91px] items-center justify-between rounded border border-[#d0d0d0] bg-white px-1.5">
        <button type="button" aria-label="Cancel"><X size={20} strokeWidth={1.2} className="text-[#a8a8a8]" /></button>
        <button type="button" aria-label="Enter"><svg width="20" height="14" viewBox="0 0 20 14" fill="none" stroke="#a8a8a8" strokeWidth="1.2"><path d="M1 7l6 6L19 1" /></svg></button>
        <button type="button" className="font-['Liberation_Serif',serif] text-xl leading-6 italic">fx</button>
      </div>
      <div className="ml-1.5 flex h-full flex-1 items-start rounded-md border border-[#d0d0d0] bg-white pr-0.5">
        <textarea aria-label="Formula" defaultValue="classification_no" className="h-full flex-1 resize-none bg-transparent pt-0.5 pl-[13px] leading-6" />
        <ChevronUp size={18} strokeWidth={1.4} className="mt-0.5" />
      </div>
    </div>
  );
}

function Sheet() {
  return (
    <table className="w-[880px] table-fixed border-collapse bg-white text-base leading-[23px] text-black">
      <colgroup>
        <col className="w-[33px]" />
        {COLUMNS.map((c) => <col key={c} className={c === 'K' ? 'w-[47px]' : 'w-20'} />)}
      </colgroup>
      <thead>
        <tr className="h-6 bg-[#f0f0f0] text-[#444]">
          <th className="border-b border-[#aaa] p-0"><svg className="mr-1 ml-auto" width="16" height="16" viewBox="0 0 16 16"><path d="M16 0v16H0z" fill="#dcdcdc" /></svg></th>
          {COLUMNS.map((c) => (
            <th key={c} className={`overflow-hidden border-x border-b border-x-[#dcdcdc] border-b-[#aaa] p-0 font-normal ${c === 'D' ? 'bg-[#e0e0e0] text-[#217346]' : ''} ${c === 'K' ? 'border-r-0 pr-0 text-right' : ''}`}>{c}</th>
          ))}
        </tr>
      </thead>
      <tbody>
        <tr className="h-6">
          <th className="border-r-2 border-b border-r-[#217346] border-b-[#dcdcdc] bg-[#e0e0e0] p-0 text-center font-normal text-[#217346]">1</th>
          {HEADERS.map((h, i) => (
            <td key={h} className={`relative border border-[#dcdcdc] p-0 whitespace-nowrap ${i === 5 || i === 6 ? 'pl-[7px]' : 'pl-[3px]'}`}>
              {h}
              {i === 3 && <span className="absolute -inset-px border-2 border-[#217346]"><span className="absolute -right-[3px] -bottom-[3px] h-[5px] w-[5px] bg-[#217346]" /></span>}
            </td>
          ))}
        </tr>
        {COORDS.map((xyz, r) => (
          <tr key={r} className="h-6">
            <th className="border-r border-b border-r-[#aaa] border-b-[#dcdcdc] bg-[#f0f0f0] p-0 text-center font-normal text-[#555]">{r + 2}</th>
            {[...xyz.map((v) => v.toFixed(1)), 1, 5, 5, 5, 0, 0].map((v, i) => (
              <td key={i} className="border border-[#dcdcdc] p-0 pr-[3px] text-right">{v}</td>
            ))}
            <td className="border border-[#dcdcdc] p-0 pl-[3px]">W</td>
            <td className="border border-[#dcdcdc] p-0" />
          </tr>
        ))}
      </tbody>
    </table>
  );
}

function SheetBar() {
  return (
    <div className="flex h-10 items-start pr-6 pl-[26px]">
      <div className="flex h-9 items-center gap-5 text-[#999]">
        <button type="button" aria-label="Previous sheet"><ChevronLeft size={20} strokeWidth={1.5} /></button>
        <button type="button" aria-label="Next sheet"><ChevronRight size={20} strokeWidth={1.5} /></button>
      </div>
      <button type="button" className="ml-[55px] h-[35px] rounded-b-md bg-white px-2.5 text-[17px] font-semibold text-[#222]">
        <span className="block border-b-2 border-[#107c41] leading-7">block mining rabbi</span>
      </button>
      <span className="mt-2 ml-1.5 h-6 w-px bg-[#ccc]" />
      <button type="button" aria-label="New sheet" className="ml-11 flex h-[38px] items-center"><Plus size={20} strokeWidth={1.8} /></button>
      <div className="ml-auto flex h-10 items-center">
        <div className="mr-[18px] flex flex-col gap-[3px]">{[0, 1, 2].map((n) => <span key={n} className="h-[3px] w-[3px] bg-[#444]" />)}</div>
        <div className="flex h-[22px] w-[315px] items-center rounded-full bg-[#f6f6f6] px-1.5">
          <svg width="9" height="12" viewBox="0 0 9 12" fill="#707070"><path d="M9 0v12L0 6z" /></svg>
          <span className="ml-1.5 h-[11px] w-[248px] rounded-full bg-[#707070]" />
          <svg className="ml-auto" width="9" height="12" viewBox="0 0 9 12" fill="#707070"><path d="M0 0v12l9-6z" /></svg>
        </div>
      </div>
    </div>
  );
}

function StatusBar({ zoom, setZoom }) {
  return (
    <div className="flex h-7 items-center border-t border-white bg-[#f4f4f4] pl-3.5 text-xs text-[#333]">
      <span>Ready</span>
      <button type="button" className="ml-7 flex items-center gap-1">
        <svg width="18" height="18" viewBox="0 0 18 18" fill="none" stroke="#333" strokeWidth="1.2"><circle cx="8" cy="3" r="2" /><path d="M1 3q-1 2 2 3l3 1v4l-3 6M15 3q1 2-2 3l-3 1v3M8 12l-3 5M12 10q1-2 3-1q2 2-1 3v2M14 16v1" /></svg>
        Accessibility: Unavailable
      </button>
      <div className="ml-auto flex h-full items-center">
        <button type="button" aria-label="Normal view" className="flex h-full w-[50px] items-center justify-center bg-[#dedede]">
          <svg width="17" height="17" viewBox="0 0 17 17" fill="none" stroke="#444" strokeWidth="1.4"><path d="M1 1h15v15H1zM6 1v15M11 1v15M1 6h15M1 11h15" /></svg>
        </button>
        <button type="button" aria-label="Page layout view" className="flex w-[50px] justify-center">
          <svg width="18" height="17" viewBox="0 0 18 17" fill="none" stroke="#444" strokeWidth="1.4"><path d="M1 1h16v15H1zM4 3h10v11H4zM6 6h6M6 8.500h6M6 11h6" /></svg>
        </button>
        <button type="button" aria-label="Page break view" className="flex w-[50px] justify-center">
          <svg width="18" height="17" viewBox="0 0 18 17" fill="none" stroke="#444" strokeWidth="1.4"><path d="M1 1h16v15H1zM1 10h10V1M6 1v9" /></svg>
        </button>
        <button type="button" aria-label="Zoom out" className="ml-1.5"><Minus size={13} strokeWidth={1.8} /></button>
        <input
          type="range" aria-label="Zoom" min="0" max="200" value={zoom} onChange={(e) => setZoom(Number(e.target.value))}
          className="mx-1 h-4 w-[126px] appearance-none bg-[linear-gradient(#555,#555)] bg-[length:100%_1px] bg-center bg-no-repeat [&::-webkit-slider-thumb]:h-3.5 [&::-webkit-slider-thumb]:w-1.5 [&::-webkit-slider-thumb]:appearance-none [&::-webkit-slider-thumb]:bg-[#555]"
        />
        <button type="button" aria-label="Zoom in"><Plus size={13} strokeWidth={1.8} /></button>
        <span className="mr-[26px] ml-3.5">{zoom}%</span>
      </div>
    </div>
  );
}

function ExcelWindow() {
  const [zoom, setZoom] = useState(100);
  return (
    <section className="absolute top-[18px] left-6 w-[907px] overflow-hidden rounded-xl border border-[#107c41] bg-linear-to-br from-[#e1e5ea] via-[#e5e6eb] to-[#ece3df] font-['Open_Sans',sans-serif] shadow-[0_16px_40px_rgba(0,0,0,0.5)]">
      <TitleBar />
      <RibbonTabs />
      <Ribbon />
      <FormulaBar />
      <div className="mt-2 flex">
        <Sheet />
        <div className="mx-auto flex w-5 flex-col items-center rounded-full bg-[#f6f6f6] pt-1.5 pb-1">
          <svg width="12" height="9" viewBox="0 0 12 9" fill="#707070"><path d="M0 9h12L6 0z" /></svg>
          <span className="mt-1.5 h-[22px] w-2.5 rounded-full bg-[#707070]" />
          <svg className="mt-auto" width="12" height="9" viewBox="0 0 12 9" fill="#707070"><path d="M0 0h12L6 9z" /></svg>
        </div>
      </div>
      <SheetBar />
      <StatusBar zoom={zoom} setZoom={setZoom} />
    </section>
  );
}

export default function App() {
  return (
    <main className="relative min-h-screen overflow-hidden bg-[#02070f]">
      <Wallpaper />
      <DesktopShortcuts />
      <SurpacWindow />
      <ExcelWindow />
    </main>
  );
}
